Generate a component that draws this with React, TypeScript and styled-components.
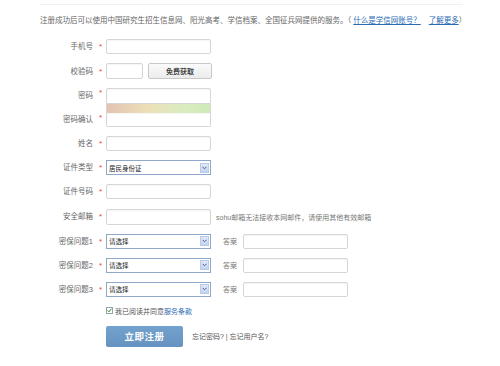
import React, { ReactElement } from "react"
import styled, { createGlobalStyle } from "styled-components"

const colors = {
	text: "#666",
	star: "#e8433c",
	link: "#2b6cb5",
	border: "#d6d6d6",
	selectBorder: "#8ea8c8",
	button: "#6c9bc9"
}

const GlobalStyle = createGlobalStyle`
	html, body {
		margin: 0;
		padding: 0;
		background: #fff;
	}
	body {
		font-family: "Liberation Sans", "Noto Sans CJK SC", sans-serif;
		color: ${colors.text};
	}
`

const Page = styled.div`
	width: 500px;
	height: 366px;
	padding: 4px 37px 0 40px;
	box-sizing: border-box;
	overflow: hidden;
`

const TopRule = styled.div`
	height: 1px;
	background: #f0f0f0;
`

const Intro = styled.p`
	margin: 11px 0 0;
	font-size: 7.5px;
	line-height: 10px;
	white-space: nowrap;
	color: #666;
`

const Link = styled.a<{ $gap?: number }>`
	color: ${colors.link};
	text-decoration: underline;
	margin-left: ${(p) => p.$gap ?? 2}px;
`

const Form = styled.div`
	margin-top: 13px;
	display: flex;
	flex-direction: column;
	gap: 9.1px;
`

const Row = styled.div`
	display: grid;
	grid-template-columns: 53px 13px max-content;
	align-items: center;
`

const Label = styled.span<{ $tall?: boolean }>`
	font-size: 7.5px;
	text-align: right;
	white-space: nowrap;
	line-height: ${(p) => (p.$tall ? "14px" : "15px")};
`

const Star = styled.span`
	color: ${colors.star};
	font-size: 8px;
	text-align: center;
	padding-left: 2px;
`

const Input = styled.div<{ $w?: number; $h?: number }>`
	width: ${(p) => p.$w ?? 105}px;
	height: ${(p) => p.$h ?? 15}px;
	flex-shrink: 0;
	box-sizing: border-box;
	border: 1px solid ${colors.border};
	border-radius: 2px;
	background: #fff;
	box-shadow: inset 0 1px 1px rgba(0, 0, 0, 0.04);
`

const Inline = styled.div`
	display: flex;
	align-items: center;
	gap: 5px;
`

const GrayButton = styled.div`
	width: 64px;
	height: 16px;
	flex-shrink: 0;
	box-sizing: border-box;
	border: 1px solid #c8c8c8;
	border-radius: 2px;
	background: linear-gradient(#fbfbfb, #ebebeb);
	font-size: 7px;
	font-weight: bold;
	color: #444;
	display: flex;
	align-items: center;
	justify-content: center;
`

const PasswordBlock = styled.div`
	display: grid;
	grid-template-columns: 53px 13px 105px;
	grid-template-rows: 16px 9px 14px;
`

const PwInput = styled(Input)`
	border-radius: 2px 2px 0 0;
`

const ConfirmInput = styled(Input)`
	border-radius: 0 0 2px 2px;
	border-top: none;
`

const StrengthBar = styled.div`
	background: linear-gradient(90deg, #e4c3b3 0%, #ece0b8 40%, #d9ecc0 75%, #cfeab8 100%);
	border-left: 1px solid ${colors.border};
	border-right: 1px solid ${colors.border};
`

const Select = styled.div`
	width: 105px;
	height: 15px;
	flex-shrink: 0;
	box-sizing: border-box;
	border: 1px solid ${colors.selectBorder};
	background: #fff;
	display: flex;
	align-items: center;
	justify-content: space-between;
	padding: 0 1px 0 2px;
	font-size: 6.5px;
	color: #222;
	white-space: nowrap;
`

const ArrowBox = styled.span`
	width: 9px;
	height: 10px;
	box-sizing: border-box;
	border: 1px solid #b8cbe8;
	background: linear-gradient(#dfe8f8, #c3d4f0);
	display: flex;
	align-items: center;
	justify-content: center;
`

const Hint = styled.span`
	font-size: 7px;
	color: #777;
	white-space: nowrap;
`

const Answer = styled.div`
	display: flex;
	align-items: center;
	gap: 6px;
	margin-left: 7px;
	font-size: 7px;
	color: #777;
	white-space: nowrap;
`

const Agree = styled.div`
	margin: 9px 0 0 66px;
	display: flex;
	align-items: center;
	gap: 2px;
	font-size: 7px;
	color: #555;
`

const CheckBox = styled.span`
	width: 7px;
	height: 7px;
	box-sizing: border-box;
	border: 1px solid #8aa;
	background: #fff;
	display: flex;
	align-items: center;
	justify-content: center;
`

const Terms = styled.a`
	color: ${colors.link};
`

const Actions = styled.div`
	margin: 10px 0 0 66px;
	display: flex;
	align-items: center;
	gap: 9px;
`

const Submit = styled.div`
	width: 77px;
	height: 21px;
	border-radius: 2px;
	background: linear-gradient(#74a2ce, #6592c0);
	color: #fff;
	font-size: 9.5px;
	font-weight: bold;
	font-family: "Noto Sans CJK SC", sans-serif;
	display: flex;
	align-items: center;
	justify-content: center;
	letter-spacing: 0.5px;
`

const Forgot = styled.span`
	font-size: 7px;
	color: #555;
	white-space: nowrap;
`

const Arrow = (): ReactElement => (
	<ArrowBox>
		<svg width="5" height="4" viewBox="0 0 5 4">
			<path d="M0.5 0.8 L2.5 2.8 L4.5 0.8" stroke="#4d6185" strokeWidth="1" fill="none" />
		</svg>
	</ArrowBox>
)

const Field = ({ label, children }: { label: string; children: React.ReactNode }): ReactElement => (
	<Row>
		<Label>{label}</Label>
		<Star>*</Star>
		{children}
	</Row>
)

const questions = ["密保问题1", "密保问题2", "密保问题3"]

export default function App(): ReactElement {
	return (
		<Page>
			<GlobalStyle />
			<TopRule />
			<Intro>
				注册成功后可以使用中国研究生招生信息网、阳光高考、学信档案、全国征兵网提供的服务。（
				<Link>什么是学信网账号？</Link>
				<Link $gap={8}>了解更多</Link>）
			</Intro>
			<Form>
				<Field label="手机号">
					<Input />
				</Field>
				<Row>
					<Label>校验码</Label>
					<Star>*</Star>
					<Inline>
						<Input $w={37} $h={16} />
						<GrayButton>免费获取</GrayButton>
					</Inline>
				</Row>
				<PasswordBlock>
					<Label>密码</Label>
					<Star>*</Star>
					<PwInput $h={16} />
					<span />
					<span />
					<StrengthBar />
					<Label $tall>密码确认</Label>
					<Star>*</Star>
					<ConfirmInput $h={14} />
				</PasswordBlock>
				<Field label="姓名">
					<Input />
				</Field>
				<Field label="证件类型">
					<Select>
						居民身份证
						<Arrow />
					</Select>
				</Field>
				<Field label="证件号码">
					<Input />
				</Field>
				<Field label="安全邮箱">
					<Inline>
						<Input $h={16} />
						<Hint>sohu邮箱无法接收本网邮件，请使用其他有效邮箱</Hint>
					</Inline>
				</Field>
				{questions.map((q) => (
					<Field key={q} label={q}>
						<Inline>
							<Select>
								请选择
								<Arrow />
							</Select>
							<Answer>
								答案
								<Input $w={105} />
							</Answer>
						</Inline>
					</Field>
				))}
			</Form>
			<Agree>
				<CheckBox>
					<svg width="5" height="5" viewBox="0 0 5 5">
						<path d="M0.6 2.4 L2 3.8 L4.4 0.8" stroke="#2f7d2f" strokeWidth="1" fill="none" />
					</svg>
				</CheckBox>
				<span>
					我已阅读并同意<Terms>服务条款</Terms>
				</span>
			</Agree>
			<Actions>
				<Submit>立即注册</Submit>
				<Forgot>忘记密码? | 忘记用户名?</Forgot>
			</Actions>
		</Page>
	)
}
